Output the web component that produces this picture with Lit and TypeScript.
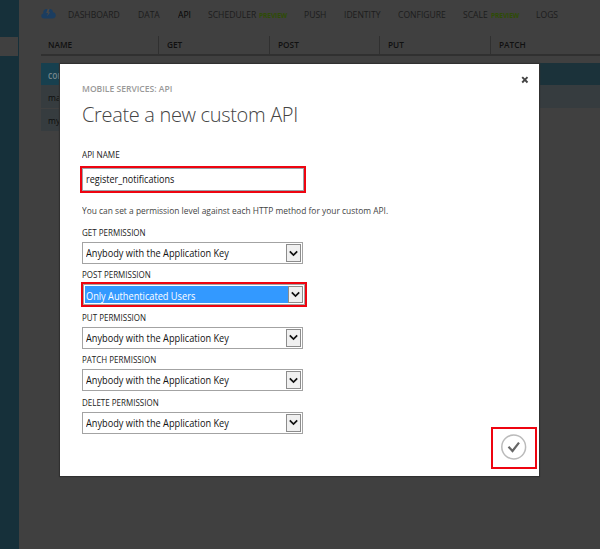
import { LitElement, html, css } from "lit";
import { customElement, property } from "lit/decorators.js";
import { classMap } from "lit/directives/class-map.js";

@customElement("permission-select")
class PermissionSelect extends LitElement {
  @property() label = "";
  @property() value = "";
  @property({ type: Boolean }) active = false;

  static styles = css`
    :host { display: block; height: 42.4px; }
    .label { height: 18px; line-height: 18px; font-size: 9.5px; transform: scaleX(0.842); transform-origin: 0 0; color: #222; white-space: nowrap; }
    .box { box-sizing: border-box; width: 221px; height: 22px; border: 1px solid #a3a3a3; display: flex; padding: 1px; background: #fff; }
    .value { flex: 1; padding-left: 2px; line-height: 19px; font-size: 10.5px; color: #111; white-space: nowrap; }
    .value span { display: inline-block; transform: scaleX(0.876); transform-origin: 0 0; }
    .arrow { box-sizing: border-box; width: 15px; height: 18px; border: 1px solid #8c8c8c; background: #f0f0f0; display: flex; align-items: center; justify-content: center; }
    .ring { box-sizing: border-box; width: 226px; height: 25px; margin: -2px 0 0 -1px; border: 2px solid #ee0410; }
    .ring .box { width: 222px; height: 21px; }
    .ring .value { background: #3399ff; color: #fff; line-height: 20px; height: 17px; padding-left: 1px; }
    .ring .arrow { height: 17px; }
    svg { display: block; }
  `;

  render() {
    return html`
      <div class="label">${this.label}</div>
      <div class=${classMap({ ring: this.active })}>
        <div class="box">
          <div class="value"><span>${this.value}</span></div>
          <div class="arrow">
            <svg width="9" height="7" viewBox="0 0 9 7"><path d="M.8 1.400 4.500 5.100 8.200 1.400" fill="none" stroke="#111" stroke-width="1.700" /></svg>
          </div>
        </div>
      </div>
    `;
  }
}

@customElement("app-root")
class AppRoot extends LitElement {
  static styles = css`
    :host { display: block; position: relative; width: 600px; height: 549px; overflow: hidden; background: #404040; font-family: "Open Sans", "Noto Sans", sans-serif; }
    .page { display: flex; height: 100%; }
    .side { width: 19px; background: #16303a; padding-top: 37px; box-sizing: border-box; flex: none; }
    .marker { width: 18px; height: 19px; background: #404040; }
    .main { width: 559px; padding-left: 22px; flex: none; }
    .nav { display: flex; align-items: center; height: 29px; font-size: 9.8px; color: #1c1c1c; white-space: nowrap; }
    .nav svg { width: 15px; margin: 0 12px 2px 0; flex: none; }
    .tab { flex: none; transform: scaleX(0.875); transform-origin: 0 0; }
    .on { color: #050505; }
    .preview { font-size: 7.6px; font-weight: 700; color: #2e4c05; letter-spacing: -0.15px; padding-top: 1px; }
    .dashboard { width: 70px; }
    .data { width: 40px; }
    .api { width: 30px; }
    .scheduler { width: 51px; }
    .push { width: 40px; }
    .identity { width: 54px; }
    .configure { width: 65px; }
    .scale { width: 28px; }
    .preview { width: 45px; }
    .logs { width: 30px; }
    .head { display: flex; margin-top: 7px; height: 20px; box-sizing: border-box; border-bottom: 2px solid #303030; font-size: 9.5px; font-weight: 600; color: #101010; }
    .head div { box-sizing: border-box; width: 110.5px; padding-left: 8px; line-height: 18px; border-left: 1px solid #303030; flex: none; height: 18px; }
    .head .first { width: 117px; border-left: 0; padding-left: 7px; }
    .head span, .row span { display: inline-block; transform: scaleX(0.87); transform-origin: 0 0; }
    .row { box-sizing: border-box; height: 23px; padding-left: 7px; line-height: 25px; font-size: 9.8px; color: #0c0c0c; background: #363c3f; overflow: hidden; }
    .rows { margin-top: 7px; }
    .row.sel { height: 22px; background: linear-gradient(to right, #17404f 19px, #1b323a 19px); color: #74848a; font-weight: 600; }
    .row.last { width: 200px; height: 22px; margin-top: 1px; line-height: 23px; }
    .dialog { position: absolute; left: 60px; top: 64px; width: 479px; height: 412px; background: #fff; box-sizing: border-box; padding: 16px 0 0 22px; box-shadow: 0 0 1px 1px #303030; }
    .crumb { height: 18px; line-height: 18px; font-size: 9.5px; font-weight: 600; color: #999; transform: scaleX(0.9); transform-origin: 0 0; }
    .title { height: 32px; margin-top: 1px; line-height: 32px; font-size: 20px; font-weight: 300; color: #444; letter-spacing: -0.33px; white-space: nowrap; }
    .name { margin-top: 15px; height: 18px; line-height: 18px; font-size: 9.5px; transform: scaleX(0.86); transform-origin: 0 0; color: #222; }
    .field { box-sizing: border-box; margin: 2px 0 0 -2px; width: 226px; height: 27px; border: 2px solid #ee0410; }
    .input { box-sizing: border-box; height: 23px; border: 1px solid #9aa3a9; padding-left: 3px; line-height: 20px; font-size: 10.2px; color: #111; }
    .input span { display: inline-block; transform: scaleX(0.888); transform-origin: 0 0; }
    .hint { height: 18px; line-height: 18px; margin: 9px 0 4px; font-size: 9.6px; transform: scaleX(0.876); transform-origin: 0 0; color: #444; white-space: nowrap; }
    .close { position: absolute; left: 461px; top: 12px; }
    .ok { position: absolute; left: 431px; top: 363px; box-sizing: border-box; width: 46px; height: 42px; border: 2px solid #ee0410; }
    svg { display: block; }
  `;

  private tabs = ["DASHBOARD", "DATA", "API", "SCHEDULER", "PUSH", "IDENTITY", "CONFIGURE", "SCALE", "LOGS"];

  private permissions = [
    { label: "GET PERMISSION", value: "Anybody with the Application Key" },
    { label: "POST PERMISSION", value: "Only Authenticated Users", active: true },
    { label: "PUT PERMISSION", value: "Anybody with the Application Key" },
    { label: "PATCH PERMISSION", value: "Anybody with the Application Key" },
    { label: "DELETE PERMISSION", value: "Anybody with the Application Key" },
  ];

  private tab(name: string) {
    const preview = name === "SCHEDULER" || name === "SCALE";
    return html`<div class="tab ${name.toLowerCase()} ${name === "API" ? "on" : ""}">${name}</div>
      ${preview ? html`<div class="tab preview">PREVIEW</div>` : null}`;
  }

  render() {
    return html`
      <div class="page">
        <div class="side"><div class="marker"></div></div>
        <div class="main">
          <div class="nav">
            <svg height="11" viewBox="0 0 15 11">
              <path d="M3 10.500C1.200 10.300.2 9.200.3 7.700.4 6.400 1.200 5.700 2.400 5.500 1.800 3.200 3 1.200 5.200 1L9.500 1C11.200 1.400 12 2.600 11.900 4.200 13.900 4.400 14.800 5.700 14.800 7.300 14.800 9.300 13.600 10.500 11.600 10.500Z" fill="#1b3d60" />
              <path d="M6.600 1 5.200 5 7 4.900 6 8.500 9.200 4.200 7.600 4.300 8.500 1Z" fill="#484848" />
            </svg>
            ${this.tabs.map((t) => this.tab(t))}
          </div>
          <div class="head">
            <div class="first"><span>NAME</span></div>
            ${["GET", "POST", "PUT", "PATCH"].map((h) => html`<div><span>${h}</span></div>`)}
          </div>
          <div class="rows">
            <div class="row sel"><span>completeall</span></div>
            <div class="row"><span>markall</span></div>
            <div class="row last"><span>myapi</span></div>
          </div>
        </div>
      </div>
      <div class="dialog">
        <div class="crumb">MOBILE SERVICES: API</div>
        <div class="title">Create a new custom API</div>
        <div class="name">API NAME</div>
        <div class="field"><div class="input"><span>register_notifications</span></div></div>
        <div class="hint">You can set a permission level against each HTTP method for your custom API.</div>
        ${this.permissions.map(
          (p) => html`<permission-select .label=${p.label} .value=${p.value} .active=${!!p.active}></permission-select>`
        )}
        <div class="close">
          <svg width="8" height="8" viewBox="0 0 8 8"><path d="M1.200 1.200 6.500 6.500M6.500 1.200 1.200 6.500" stroke="#444" stroke-width="1.900" /></svg>
        </div>
        <div class="ok">
          <svg width="42" height="38" viewBox="0 0 42 38">
            <circle cx="20.700" cy="18" r="11.900" fill="none" stroke="#bbb" stroke-width="1.500" />
            <path d="M15.500 17.800 19.500 22 26 13.600" fill="none" stroke="#666" stroke-width="2.200" />
          </svg>
        </div>
      </div>
    `;
  }
}
